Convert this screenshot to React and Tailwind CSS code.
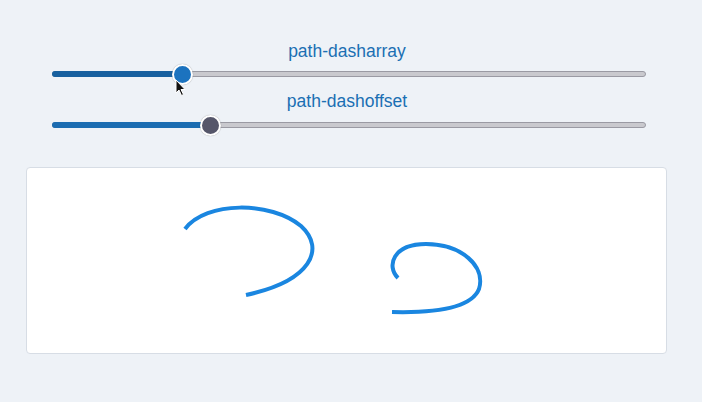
import React from "react";

function Slider({ pos, fill, thumb }) {
  return (
    <div className="relative ml-[52px] w-[594px] h-[20px] flex items-center">
      <div className="w-full h-[6px] rounded-full bg-[#c9c9ce] border border-[#9a9aa3]" />
      <div
        className="absolute left-0 top-[7px] h-[6px] rounded-full"
        style={{ width: pos, background: fill }}
      />
      <div
        className="absolute top-0 w-[21px] h-[21px] rounded-full border-2 border-white shadow-[0_0_1px_rgba(0,0,0,0.4)]"
        style={{ left: pos - 10, background: thumb }}
      />
    </div>
  );
}

export default function App() {
  return (
    <div
      className="relative w-[702px] h-[402px] overflow-hidden bg-[#eef2f7] flex flex-col"
      style={{ fontFamily: '"Liberation Sans", Arial, sans-serif' }}
    >
      <div className="pt-[40px]">
        <div className="pr-[8px] text-center text-[17.5px] leading-[22px] text-[#1b6fb3]">path-dasharray</div>
        <div className="mt-[2px]">
          <Slider pos={130} fill="#17609f" thumb="#1c73bf" />
        </div>
        <div className="mt-[6px] pr-[8px] text-center text-[17.5px] leading-[22px] text-[#1b6fb3]">path-dashoffset</div>
        <div className="mt-[3px]">
          <Slider pos={158} fill="#1b6cb1" thumb="#55566a" />
        </div>
      </div>
      <div className="mt-[32px] ml-[26px] w-[641px] h-[187px] bg-white border border-[#d7dde5] rounded-[4px]">
        <svg width="641" height="187" viewBox="0 0 641 187" fill="none">
          <path
            d="M158,61 C179,33 244,33 274,58 C299,81 284,113 219,127"
            stroke="#1a86e0"
            strokeWidth="4"
            strokeLinecap="butt"
          />
          <path
            d="M371,110 C359,98 366,76 399,76 C434,76 459,98 452,121 C444,141 404,145 365,144"
            stroke="#1a86e0"
            strokeWidth="4"
            strokeLinecap="butt"
          />
        </svg>
      </div>
      <svg
        className="absolute left-[175px] top-[79px]"
        width="12"
        height="18"
        viewBox="0 0 12 18"
      >
        <path
          d="M1,1 L1,14 L4,11 L6.5,16.5 L8.5,15.5 L6,10.5 L10,10.5 Z"
          fill="#111"
          stroke="#fff"
          strokeWidth="1"
          strokeLinejoin="round"
        />
      </svg>
    </div>
  );
}
